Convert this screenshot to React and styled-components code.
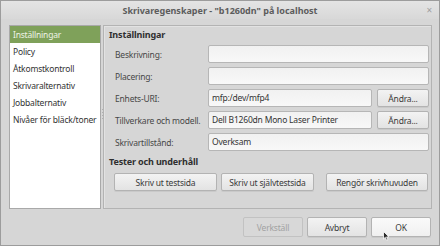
import React from "react";
import styled, { createGlobalStyle } from "styled-components";

const GlobalStyle = createGlobalStyle`
    html, body {
        margin: 0;
        padding: 0;
        background: #d6d6d6;
    }
    * {
        box-sizing: border-box;
    }
`;

const Window = styled.div`
    width: 440px;
    height: 246px;
    border: 1px solid #9c9c9c;
    background: #d6d6d6;
    display: flex;
    flex-direction: column;
    font-family: "Noto Sans", "DejaVu Sans", sans-serif;
    font-size: 8.5px;
    letter-spacing: -0.2px;
    color: #3c3c3c;
    overflow: hidden;
`;

const TitleBar = styled.div`
    height: 18px;
    display: grid;
    grid-template-columns: 1fr auto 1fr;
    align-items: center;
    background: linear-gradient(#e4e4e4, #d8d8d8);
`;

const Title = styled.div`
    grid-column: 2;
    font-size: 9px;
    letter-spacing: 0;
    font-weight: bold;
    color: #5c5c5c;
    white-space: nowrap;
`;

const CloseButton = styled.div`
    grid-column: 3;
    justify-self: end;
    margin-right: 7px;
    color: #a0a0a0;
    font-size: 10px;
    line-height: 10px;
`;

const Body = styled.div`
    flex: 1;
    display: flex;
    flex-direction: column;
    padding: 6px 7px 8px 8px;
`;

const Main = styled.div`
    height: 184px;
    display: flex;
`;

const Sidebar = styled.div`
    width: 92px;
    border: 1px solid #a9a9a9;
    background: #ffffff;
    display: flex;
    flex-direction: column;
`;

const SidebarItem = styled.div`
    height: 17px;
    line-height: 17px;
    padding-left: 3px;
    white-space: nowrap;
    overflow: hidden;
    background: ${(p) => (p.$active ? "#7fa15a" : "transparent")};
    color: ${(p) => (p.$active ? "#eef3e6" : "#333333")};
`;

const Handle = styled.div`
    width: 2px;
    display: flex;
    flex-direction: column;
    align-items: center;
    justify-content: center;
    gap: 2px;
    padding-bottom: 6px;
`;

const HandleDot = styled.span`
    width: 1px;
    height: 1px;
    background: #b0b0b0;
`;

const Panel = styled.div`
    flex: 1;
    border: 1px solid #b3b3b3;
    box-shadow: inset 1px 1px 0 #e2e2e2;
    padding: 3px 2px 0 5px;
    display: flex;
    flex-direction: column;
`;

const Heading = styled.div`
    height: 12px;
    line-height: 12px;
    font-size: 9px;
    letter-spacing: -0.15px;
    font-weight: bold;
    color: #2f2f2f;
    margin-top: ${(p) => p.$top || 0}px;
`;

const Form = styled.div`
    margin-top: 4px;
    margin-left: 6px;
    display: grid;
    grid-template-columns: 93px 1fr;
    grid-auto-rows: 18px;
    row-gap: 4px;
`;

const Label = styled.div`
    display: flex;
    align-items: center;
    color: #474747;
    white-space: nowrap;
`;

const FieldRow = styled.div`
    display: flex;
    gap: 5px;
`;

const Input = styled.div`
    flex: 1;
    height: 18px;
    line-height: 16px;
    border: 1px solid #b6b6b6;
    border-radius: 2px;
    background: linear-gradient(#f1f1f1, #f8f8f8);
    padding-left: 3px;
    color: #333333;
    white-space: nowrap;
    overflow: hidden;
`;

const Button = styled.div`
    position: relative;
    width: ${(p) => p.$w}px;
    height: ${(p) => p.$h || 18}px;
    margin-left: ${(p) => p.$ml || 0}px;
    display: flex;
    align-items: center;
    justify-content: center;
    border: 1px solid ${(p) => (p.$disabled ? "#c2c2c2" : "#b3b3b3")};
    border-radius: 2px;
    background: ${(p) =>
        p.$disabled
            ? "#d8d8d8"
            : p.$focus
            ? "linear-gradient(#fafafa, #f0f0f0)"
            : "linear-gradient(#f3f3f3, #e3e3e3)"};
    box-shadow: ${(p) => (p.$disabled ? "none" : "0 1px 0 rgba(0,0,0,0.06)")};
    color: ${(p) => (p.$disabled ? "#a2a2a2" : "#3a3a3a")};
    white-space: nowrap;
`;

const TestRow = styled.div`
    margin-top: 5px;
    margin-left: 5px;
    display: flex;
`;

const Footer = styled.div`
    margin-top: 8px;
    padding-right: 1px;
    display: flex;
    justify-content: flex-end;
    gap: 4px;
`;

const Cursor = styled.svg`
    position: absolute;
    left: 11px;
    top: 13px;
`;

const items = [
    "Inställningar",
    "Policy",
    "Åtkomstkontroll",
    "Skrivaralternativ",
    "Jobbalternativ",
    "Nivåer för bläck/toner",
];

const App = () => {
    return (
        <>
            <GlobalStyle />
            <Window>
                <TitleBar>
                    <Title>Skrivaregenskaper - "b1260dn" på localhost</Title>
                    <CloseButton>×</CloseButton>
                </TitleBar>
                <Body>
                    <Main>
                        <Sidebar>
                            {items.map((it, i) => (
                                <SidebarItem key={it} $active={i === 0}>
                                    {it}
                                </SidebarItem>
                            ))}
                        </Sidebar>
                        <Handle>
                            <HandleDot />
                            <HandleDot />
                            <HandleDot />
                            <HandleDot />
                        </Handle>
                        <Panel>
                            <Heading>Inställningar</Heading>
                            <Form>
                                <Label>Beskrivning:</Label>
                                <FieldRow>
                                    <Input />
                                </FieldRow>
                                <Label>Placering:</Label>
                                <FieldRow>
                                    <Input />
                                </FieldRow>
                                <Label>Enhets-URI:</Label>
                                <FieldRow>
                                    <Input>mfp:/dev/mfp4</Input>
                                    <Button $w={52}>Ändra...</Button>
                                </FieldRow>
                                <Label>Tillverkare och modell.</Label>
                                <FieldRow>
                                    <Input>Dell B1260dn Mono Laser Printer</Input>
                                    <Button $w={52}>Ändra...</Button>
                                </FieldRow>
                                <Label>Skrivartillstånd:</Label>
                                <FieldRow>
                                    <Input>Overksam</Input>
                                </FieldRow>
                            </Form>
                            <Heading $top={5}>Tester och underhåll</Heading>
                            <TestRow>
                                <Button $w={103}>Skriv ut testsida</Button>
                                <Button $w={93} $ml={4}>Skriv ut självtestsida</Button>
                                <Button $w={102} $ml={12}>Rengör skrivhuvuden</Button>
                            </TestRow>
                        </Panel>
                    </Main>
                    <Footer>
                        <Button $w={60} $h={20} $disabled>Verkställ</Button>
                        <Button $w={60} $h={20}>Avbryt</Button>
                        <Button $w={60} $h={20} $focus>
                            OK
                            <Cursor width="8" height="10" viewBox="0 0 8 10">
                                <path d="M0.5 0.5 L0.5 8 L2.3 6.3 L3.6 9.3 L4.8 8.8 L3.6 5.9 L6 5.9 Z" fill="#2a2a2a" stroke="#ffffff" strokeWidth="0.8" />
                            </Cursor>
                        </Button>
                    </Footer>
                </Body>
            </Window>
        </>
    );
};

export default App;
